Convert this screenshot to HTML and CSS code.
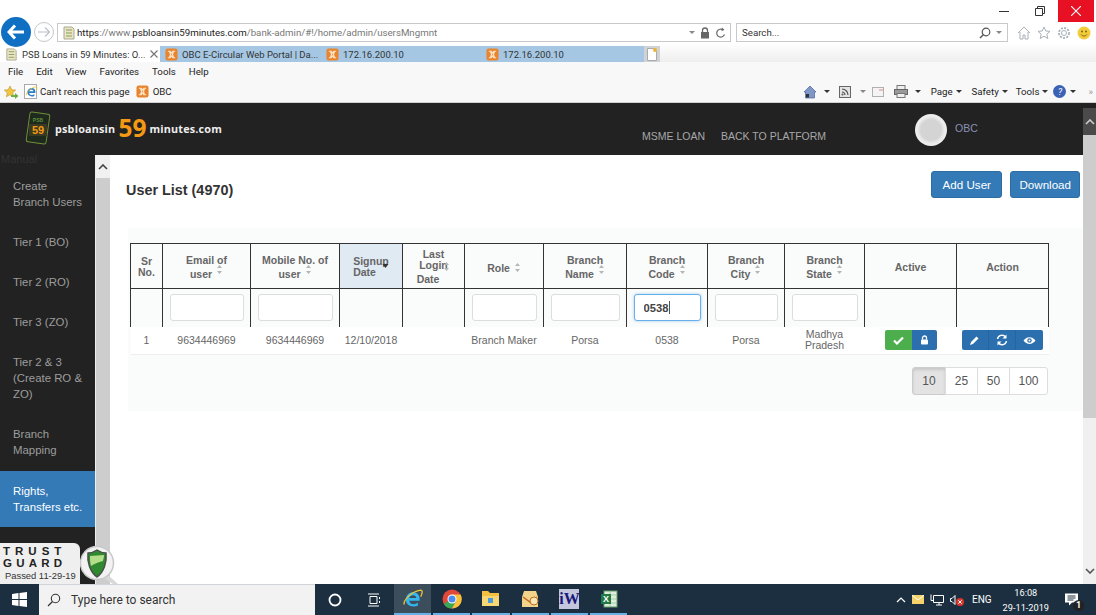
FILE: index.html
```html
<!DOCTYPE html>
<html lang="en">
<head>
    <meta charset="UTF-8">
    <meta name="viewport" content="width=device-width, initial-scale=1.0">
    <title>PSB Loans in 59 Minutes</title>
    <link rel="stylesheet" href="styles.css">
</head>
<body>
    <svg class="sprite" width="0" height="0">
        <symbol id="xampp" viewBox="0 0 14 14">
            <rect x="0.5" y="0.5" width="13" height="13" rx="2.5" fill="#e8832e"/>
            <path d="M3 3.500h2.500l1.500 2 1.500-2H11M3 10.500h2.500l1.500-2 1.500 2H11M5 4l1 3-1 3M9 4L8 7l1 3" fill="none" stroke="#fbe6c8" stroke-width="1.300"/>
        </symbol>
        <symbol id="page" viewBox="0 0 14 16">
            <path d="M2 2h8l2 2v10H2z" fill="#e9e6c8" stroke="#a9a88e"/>
            <path d="M4 5h6M4 8h6M4 11h6" stroke="#8f9a55"/>
        </symbol>
        <symbol id="ie" viewBox="0 0 20 20">
            <path d="M16 11.500H6.500C7 15 11.500 15.500 14.500 13.500V16C10 18 3.500 16.500 3.500 10.500 3.500 5.500 8 3 12 4 15 5 16.500 8 16 11.500zM6.500 9H13C13 5.800 7.500 5.500 6.500 9z" fill="currentColor"/>
            <path d="M2 15C1 11 9 3 17 2c2 0 1.500 3 0 6" fill="none" stroke="#f0c330" stroke-width="1.200"/>
        </symbol>
        <symbol id="sort" viewBox="0 0 7 11">
            <path d="M3.500 1L6 4H1zM3.500 10L1 7h5z" fill="#b5b5b5"/>
        </symbol>
    </svg>

    <!-- browser window -->
    <div class="titlebar">
        <span class="win-btn"><svg width="10" height="10"><path d="M0 5.500h10" stroke="#333"/></svg></span>
        <span class="win-btn"><svg width="10" height="10"><path d="M2.500 2.500V.5h7v7h-2M.5 2.500h7v7h-7z" fill="none" stroke="#333"/></svg></span>
        <span class="win-btn win-close"><svg width="10" height="10"><path d="M0 0l10 10M10 0L0 10" stroke="#fff" stroke-width="1.100"/></svg></span>
    </div>

    <div class="addressrow">
        <span class="back"><svg width="18" height="16" viewBox="0 0 18 16"><path d="M8 1.500L2 8l6 6.500M2.500 8H17" fill="none" stroke="#fff" stroke-width="3"/></svg></span>
        <span class="forward"><svg width="12" height="10" viewBox="0 0 12 10"><path d="M7 .5L11.500 5 7 9.500M11 5H0" fill="none" stroke="#b8c0c8" stroke-width="1.200"/></svg></span>
        <div class="urlbar">
            <svg class="url-icon" width="14" height="16"><use href="#page"/></svg>
            <span class="url"><b>https</b>://www.<b>psbloansin59minutes.com</b>/bank-admin/#!/home/admin/usersMngmnt</span>
            <span class="url-tools">
                <i class="mini-caret"></i>
                <svg width="10" height="12" viewBox="0 0 10 12"><path d="M2.500 5V3.500a2.500 2.500 0 0 1 5 0V5" fill="none" stroke="#666" stroke-width="1.300"/><rect x="1" y="5" width="8" height="6.500" fill="#666"/></svg>
                <svg width="11" height="12" viewBox="0 0 11 12"><path d="M9.500 7.500A4 4 0 1 1 8 2.800" fill="none" stroke="#666" stroke-width="1.200"/><path d="M7 .5l2.500 2.500L6.500 4z" fill="#666"/></svg>
            </span>
        </div>
        <div class="searchbar">
            <span>Search...</span>
            <span class="url-tools">
                <svg width="12" height="12" viewBox="0 0 12 12"><circle cx="7" cy="5" r="3.800" fill="none" stroke="#555" stroke-width="1.200"/><path d="M4.300 7.700L1 11" stroke="#555" stroke-width="1.400"/></svg>
                <i class="mini-caret"></i>
            </span>
        </div>
        <div class="toolicons">
            <svg width="14" height="14" viewBox="0 0 14 14"><path d="M1 7l6-6 6 6M3 6v7h3V9h2v4h3V6" fill="none" stroke="#a8b0b8"/></svg>
            <svg width="14" height="14" viewBox="0 0 14 14"><path d="M7 1l1.800 4 4.200.4-3.200 2.800 1 4.300L7 10.200 3.200 12.500l1-4.300L1 5.400 5.200 5z" fill="none" stroke="#a8b0b8"/></svg>
            <svg width="14" height="14" viewBox="0 0 14 14"><circle cx="7" cy="7" r="2.500" fill="none" stroke="#a8b0b8"/><circle cx="7" cy="7" r="5" fill="none" stroke="#a8b0b8" stroke-width="1.800" stroke-dasharray="2 1.300"/></svg>
            <svg width="14" height="14" viewBox="0 0 14 14"><circle cx="7" cy="7" r="6.500" fill="#f4cc3a"/><circle cx="5" cy="5.500" r="1" fill="#7c6414"/><circle cx="9" cy="5.500" r="1" fill="#7c6414"/><path d="M4 8.500c1.500 2 4.500 2 6 0" fill="none" stroke="#7c6414"/></svg>
        </div>
    </div>

    <div class="tabrow">
        <div class="tab tab-active">
            <svg width="13" height="15"><use href="#page"/></svg>
            <span class="tab-title">PSB Loans in 59 Minutes: O...</span>
            <svg class="tab-x" width="8" height="8"><path d="M.5.500l7 7M7.500.500l-7 7" stroke="#777" stroke-width="1.200"/></svg>
        </div>
        <div class="tab tab-wide"><svg width="13" height="13"><use href="#xampp"/></svg><span>OBC E-Circular Web Portal | Da...</span></div>
        <div class="tab tab-ip"><svg width="13" height="13"><use href="#xampp"/></svg><span>172.16.200.10</span></div>
        <div class="tab tab-ip tab-last"><svg width="13" height="13"><use href="#xampp"/></svg><span>172.16.200.10</span></div>
        <div class="tab-new"><svg width="10" height="13" viewBox="0 0 10 13"><path d="M.5.500h6l3 3v9h-9z" fill="#fff" stroke="#aaa"/><circle cx="8" cy="2" r="2" fill="#f0b232"/></svg></div>
    </div>

    <div class="menubar">
        <span>File</span><span>Edit</span><span>View</span><span>Favorites</span><span>Tools</span><span>Help</span>
    </div>

    <div class="favbar">
        <svg class="fav-star" width="16" height="14" viewBox="0 0 16 14"><path d="M7 1l1.700 3.700 4 .4-3 2.700.9 4L7 9.800 3.400 11.800l.9-4-3-2.700 4-.4z" fill="#f2c53d" stroke="#b8922a" stroke-width=".6"/><path d="M8 10h4V8l3.500 3-3.500 3v-2H8z" fill="#6fae45"/></svg>
        <span class="fav-ie"><svg width="13" height="14" class="ie-blue"><use href="#ie"/></svg></span>
        <span class="fav-text">Can't reach this page</span>
        <svg class="fav-xampp" width="13" height="13"><use href="#xampp"/></svg>
        <span>OBC</span>
        <div class="cmdbar">
            <svg width="14" height="14" viewBox="0 0 14 14"><path d="M1 7l6-6 6 6-1.500 0v6h-9V7z" fill="#7e97c9" stroke="#4d649b" stroke-width=".7"/><rect x="3" y="9" width="3" height="3.500" fill="#333"/></svg><i class="mini-caret dark"></i>
            <svg class="cmd-rss" width="12" height="12" viewBox="0 0 12 12"><rect x=".5" y=".5" width="11" height="11" fill="#e4e4e4" stroke="#666"/><path d="M3 3a6 6 0 0 1 6 6M3 6a3 3 0 0 1 3 3" fill="none" stroke="#555" stroke-width="1.200"/><circle cx="3.500" cy="8.500" r="1" fill="#555"/></svg><i class="mini-caret"></i>
            <svg class="cmd-mail" width="12" height="10" viewBox="0 0 12 10"><rect x=".5" y=".5" width="11" height="9" fill="#f4f4f4" stroke="#b0b0b0"/><path d="M7 3h4" stroke="#d88"/></svg>
            <svg class="cmd-print" width="14" height="13" viewBox="0 0 14 13"><rect x="3" y=".5" width="8" height="4" fill="#eee" stroke="#777"/><rect x=".5" y="4.500" width="13" height="5" fill="#999" stroke="#666"/><rect x="3" y="8.500" width="8" height="4" fill="#eee" stroke="#777"/></svg><i class="mini-caret dark"></i>
            <span class="cmd-label">Page<i class="mini-caret dark"></i></span>
            <span class="cmd-label">Safety<i class="mini-caret dark"></i></span>
            <span class="cmd-label cmd-tools">Tools<i class="mini-caret dark"></i></span>
            <span class="cmd-help"><i>?</i></span><i class="mini-caret dark"></i>
            <span class="cmd-more">»</span>
        </div>
    </div>

    <!-- site -->
    <div class="viewport">
        <div class="site">
            <header class="site-header">
                <div class="brand">
                    <svg class="brand-logo" width="26" height="36" viewBox="0 0 26 36">
                        <rect x="3" y="3" width="20" height="30" rx="2" fill="#1d2a1d" stroke="#6f8f3a" transform="rotate(8 13 18)"/>
                        <text x="13" y="12" class="logo-psb">PSB</text>
                        <rect x="4" y="14" width="18" height="12" fill="#3a3a22"/>
                        <text x="13" y="24" class="logo-59">59</text>
                    </svg>
                    <span class="brand-name">psbloansin</span>
                    <span class="brand-59">59</span>
                    <span class="brand-name">minutes.com</span>
                </div>
                <nav class="site-nav">
                    <a href="#">MSME LOAN</a>
                    <a href="#">BACK TO PLATFORM</a>
                </nav>
                <div class="user">
                    <span class="avatar"></span>
                    <span class="user-name">OBC</span>
                </div>
            </header>

            <div class="main">
                <aside class="sidebar">
                    <div class="side-label">Manual</div>
                    <a class="side-item" href="#">Create<br>Branch Users</a>
                    <a class="side-item" href="#">Tier 1 (BO)</a>
                    <a class="side-item" href="#">Tier 2 (RO)</a>
                    <a class="side-item" href="#">Tier 3 (ZO)</a>
                    <a class="side-item" href="#">Tier 2 &amp; 3 (Create RO &amp; ZO)</a>
                    <a class="side-item" href="#">Branch Mapping</a>
                    <a class="side-item side-active" href="#">Rights, Transfers etc.</a>
                </aside>
                <div class="side-scroll">
                    <span class="side-up"><svg width="10" height="6" viewBox="0 0 10 6"><path d="M1 5l4-4 4 4" fill="none" stroke="#444" stroke-width="1.600"/></svg></span>
                </div>

                <section class="content">
                    <div class="page-head">
                        <h2>User List (4970)</h2>
                        <div class="head-btns">
                            <button class="btn btn-add">Add User</button>
                            <button class="btn">Download</button>
                        </div>
                    </div>

                    <div class="panel">
                        <table class="users">
                            <colgroup>
                                <col class="c32"><col class="c88"><col class="c89"><col class="c63"><col class="c62"><col class="c79"><col class="c83"><col class="c81"><col class="c77"><col class="c80"><col class="c92"><col class="c92">
                            </colgroup>
                            <thead>
                                <tr>
                                    <th>Sr<br>No.</th>
                                    <th>Email of<br>user <svg class="sort" width="7" height="11"><use href="#sort"/></svg></th>
                                    <th>Mobile No. of<br>user <svg class="sort" width="7" height="11"><use href="#sort"/></svg></th>
                                    <th class="sorted">Signup<br>Date <svg class="sort sort-on" width="7" height="6" viewBox="0 0 7 6"><path d="M3.500 5L.5 1h6z" fill="#333"/></svg></th>
                                    <th>Last<br>Login<br>Date <svg class="sort sort-high" width="7" height="11"><use href="#sort"/></svg></th>
                                    <th>Role <svg class="sort sort-flat" width="7" height="11"><use href="#sort"/></svg></th>
                                    <th>Branch<br>Name <svg class="sort" width="7" height="11"><use href="#sort"/></svg></th>
                                    <th>Branch<br>Code <svg class="sort" width="7" height="11"><use href="#sort"/></svg></th>
                                    <th>Branch<br>City <svg class="sort" width="7" height="11"><use href="#sort"/></svg></th>
                                    <th>Branch<br>State <svg class="sort" width="7" height="11"><use href="#sort"/></svg></th>
                                    <th>Active</th>
                                    <th>Action</th>
                                </tr>
                                <tr class="filters">
                                    <td></td>
                                    <td><input type="text"></td>
                                    <td><input type="text"></td>
                                    <td></td>
                                    <td></td>
                                    <td><input type="text"></td>
                                    <td><input type="text"></td>
                                    <td><div class="caret-wrap"><input class="focused" type="text" value="0538"></div></td>
                                    <td><input type="text"></td>
                                    <td><input type="text"></td>
                                    <td></td>
                                    <td></td>
                                </tr>
                            </thead>
                            <tbody>
                                <tr class="row">
                                    <td>1</td>
                                    <td>9634446969</td>
                                    <td>9634446969</td>
                                    <td>12/10/2018</td>
                                    <td></td>
                                    <td>Branch Maker</td>
                                    <td>Porsa</td>
                                    <td>0538</td>
                                    <td>Porsa</td>
                                    <td>Madhya Pradesh</td>
                                    <td>
                                        <div class="btn-group">
                                            <span class="ico ico-green ico-w27"><svg width="11" height="9" viewBox="0 0 11 9"><path d="M1 4.500L4 7.500 10 1.500" fill="none" stroke="#fff" stroke-width="2.200"/></svg></span>
                                            <span class="ico ico-w25"><svg width="9" height="10" viewBox="0 0 9 10"><path d="M2.500 4.500V3a2 2 0 0 1 4 0v1.500" fill="none" stroke="#fff" stroke-width="1.300"/><rect x="1" y="4.500" width="7" height="5" rx="1" fill="#fff"/></svg></span>
                                        </div>
                                    </td>
                                    <td>
                                        <div class="btn-group">
                                            <span class="ico"><svg width="11" height="11" viewBox="0 0 11 11"><path d="M1 10l1-3 5.500-5.500 2 2L4 9z" fill="#fff"/></svg></span>
                                            <span class="ico"><svg width="12" height="12" viewBox="0 0 12 12"><path d="M1.500 5A4.500 4.500 0 0 1 9.500 3M10.500 7A4.500 4.500 0 0 1 2.500 9" fill="none" stroke="#fff" stroke-width="1.500"/><path d="M10.500.5v4h-4zM1.500 11.500v-4h4z" fill="#fff"/></svg></span>
                                            <span class="ico"><svg width="13" height="9" viewBox="0 0 13 9"><path d="M.5 4.500C3.500.0 9.500.0 12.500 4.500 9.500 9 3.500 9 .5 4.500z" fill="#fff"/><circle cx="6.500" cy="4.500" r="2.200" fill="#2b6fae"/><circle cx="6.500" cy="4.500" r="1" fill="#fff"/></svg></span>
                                        </div>
                                    </td>
                                </tr>
                            </tbody>
                        </table>
                        <div class="pager">
                            <span class="page-btn page-on">10</span><span class="page-btn">25</span><span class="page-btn">50</span><span class="page-btn page-100">100</span>
                        </div>
                    </div>
                </section>
            </div>
        </div>

        <div class="page-scroll">
            <span class="scroll-up"><svg width="10" height="6" viewBox="0 0 10 6"><path d="M1 5l4-4 4 4" fill="none" stroke="#ccc" stroke-width="1.600"/></svg></span>
            <span class="scroll-thumb"></span>
            <span class="scroll-track"></span>
            <span class="scroll-down"><svg width="10" height="6" viewBox="0 0 10 6"><path d="M1 1l4 4 4-4" fill="none" stroke="#555" stroke-width="1.600"/></svg></span>
        </div>

        <div class="trust">
            <div class="trust-text">
                <div class="trust-word">TRUST</div>
                <div class="trust-word">GUARD</div>
                <div class="trust-date">Passed 11-29-19</div>
            </div>
            <svg class="trust-seal" width="38" height="39" viewBox="0 0 38 39">
                <path d="M28 30l10 9h-5L24 33z" fill="#d8d8d8"/>
                <circle cx="17" cy="18" r="16.500" fill="#f2f2f2" stroke="#c8c8c8" stroke-width="1.500"/>
                <path d="M17 5c3 2 6 3 9 3 1 9-2 19-9 24C10 27 7 17 8 8c3 0 6-1 9-3z" fill="#2f8a2f" stroke="#4a4f4a" stroke-width="1.500"/>
                <path d="M10 11c4 0 10-1 14-1 0 3-1 5-1 6-5 1-9 3-12 5-1-3-1-7-1-10z" fill="#b4dd8c"/>
            </svg>
        </div>
    </div>

    <!-- taskbar -->
    <footer class="taskbar">
        <span class="start"><svg width="15" height="15" viewBox="0 0 15 15"><path d="M0 2l6.500-1v6H0zM7.500 1L15 0v7H7.500zM0 8h6.500v6L0 13zM7.500 8H15v7l-7.500-1z" fill="#fff"/></svg></span>
        <div class="task-search">
            <svg width="14" height="14" viewBox="0 0 14 14"><circle cx="8.500" cy="5.500" r="4.200" fill="none" stroke="#333" stroke-width="1.100"/><path d="M5.500 8.500L1 13" stroke="#333" stroke-width="1.200"/></svg>
            <span>Type here to search</span>
        </div>
        <span class="task-slot"><svg width="14" height="14" viewBox="0 0 14 14"><circle cx="7" cy="7" r="5.500" fill="none" stroke="#fff" stroke-width="1.800"/></svg></span>
        <span class="task-slot"><svg width="14" height="14" viewBox="0 0 14 14"><path d="M3 3.500h7v7H3zM1 1h11M1 13h11M12.500 4v2M12.500 8v2" fill="none" stroke="#fff"/></svg></span>
        <span class="task-app task-app-on"><svg class="ie-cyan" width="22" height="22"><use href="#ie"/></svg></span>
        <span class="task-app"><svg width="20" height="20" viewBox="0 0 20 20"><circle cx="10" cy="10" r="9.500" fill="#e0483a"/><path d="M10 10L1.800 15A9.500 9.500 0 0 0 10 19.500L14 12z" fill="#3aa757"/><path d="M10 5.500h8.600A9.500 9.500 0 0 1 10 19.500L14 12z" fill="#f6c23c"/><circle cx="10" cy="10" r="4.500" fill="#fff"/><circle cx="10" cy="10" r="3.500" fill="#4a8cf0"/></svg></span>
        <span class="task-app"><svg width="19" height="17" viewBox="0 0 19 17"><path d="M1 1h6l2 2h9v13H1z" fill="#f3c13f"/><rect x="1" y="6" width="17" height="10" fill="#f7d774"/><rect x="7" y="8" width="5" height="5" fill="#4a9bd8"/></svg></span>
        <span class="task-app"><svg width="20" height="20" viewBox="0 0 20 20"><path d="M4 2h12l2 6v10H2V8z" fill="#f3d28a"/><path d="M3 8l7 5 7-5" fill="none" stroke="#c46a1e" stroke-width="1.500"/><circle cx="14" cy="12" r="4" fill="#f5e6b8" stroke="#c46a1e"/></svg></span>
        <span class="task-app"><span class="iw">iW</span></span>
        <span class="task-app"><svg width="18" height="18" viewBox="0 0 18 18"><rect x="4" y="1" width="13" height="16" fill="#dfeeda" stroke="#5d9b6a"/><path d="M4 5h13M4 9h13M4 13h13M10 1v16" stroke="#8cbb95" stroke-width=".7"/><rect x="1" y="4" width="10" height="10" fill="#1f7a45"/><text x="6" y="12" class="xl">X</text></svg></span>
        <div class="tray">
            <svg width="10" height="6" viewBox="0 0 10 6"><path d="M1 5l4-4 4 4" fill="none" stroke="#fff" stroke-width="1.200"/></svg>
            <svg width="12" height="9" viewBox="0 0 12 9"><rect width="12" height="9" fill="#f5d36a"/><path d="M0 0l6 5 6-5" fill="none" stroke="#fff"/></svg>
            <svg width="14" height="12" viewBox="0 0 14 12"><path d="M3.500 1.500h10v7h-10zM1 .5v6h2M6 11h6M9 9v2" fill="none" stroke="#fff"/></svg>
            <svg class="tray-sound" width="14" height="12" viewBox="0 0 14 12"><path d="M5 1.500L2 4.500H.5v3H2l3 3z" fill="none" stroke="#fff"/><circle cx="10" cy="8" r="4" fill="#d9352b"/><path d="M8.300 6.300l3.400 3.400M11.700 6.300L8.300 9.700" stroke="#fff"/></svg>
            <span class="tray-lang">ENG</span>
            <span class="clock"><span>16:08</span><span>29-11-2019</span></span>
            <span class="notify">
                <svg width="15" height="13" viewBox="0 0 15 13"><path d="M1 .5h13v9H8l-3 3v-3H1z" fill="#fff"/><path d="M3.500 3h8M3.500 5h8M3.500 7h6" stroke="#1d3042"/></svg>
                <b class="notify-count">1</b>
            </span>
        </div>
    </footer>
</body>
</html>
```

FILE: styles.css
```css
* {
    box-sizing: border-box;
}
html, body {
    margin: 0;
    padding: 0;
}
body {
    width: 1096px;
    height: 615px;
    overflow: hidden;
    display: flex;
    flex-direction: column;
    position: relative;
    font-family: "Liberation Sans", Arial, sans-serif;
    background: #fff;
}
.sprite {
    position: absolute;
}
svg {
    flex: none;
}

/* browser chrome */
.titlebar {
    height: 22px;
    display: flex;
    justify-content: flex-end;
    background: #fff;
    padding-right: 2px;
}
.win-btn {
    width: 36px;
    display: flex;
    align-items: center;
    justify-content: center;
}
.win-close {
    background: #e81123;
}
.addressrow {
    height: 21px;
    display: flex;
    align-items: center;
    padding-left: 1px;
    font-family: Roboto, sans-serif;
    font-size: 9.7px;
    color: #333;
    background: #fff;
}
.back {
    width: 30px;
    height: 30px;
    margin-top: -2px;
    border-radius: 50%;
    background: #0f6fc2;
    display: flex;
    align-items: center;
    justify-content: center;
    flex: none;
    position: relative;
    z-index: 2;
}
.forward {
    width: 20px;
    height: 20px;
    margin-left: 3px;
    margin-top: -2px;
    border-radius: 50%;
    border: 1px solid #c4c8cc;
    display: flex;
    align-items: center;
    justify-content: center;
    flex: none;
}
.urlbar, .searchbar {
    height: 19px;
    display: flex;
    align-items: center;
    border: 1px solid #c9c9c9;
    background: #fff;
}
.urlbar {
    width: 674px;
    margin-left: 3px;
    padding: 0 4px;
}
.url-icon {
    margin-right: 1px;
}
.url {
    color: #777;
    white-space: nowrap;
}
.url b {
    font-weight: 400;
    color: #222;
}
.url-tools {
    margin-left: auto;
    display: flex;
    align-items: center;
    gap: 5px;
}
.searchbar {
    width: 272px;
    margin-left: 5px;
    padding: 0 5px;
}
.toolicons {
    display: flex;
    gap: 6px;
    margin-left: 9px;
}
.mini-caret {
    display: inline-block;
    width: 0;
    height: 0;
    border-left: 3px solid transparent;
    border-right: 3px solid transparent;
    border-top: 3px solid #888;
}
.mini-caret.dark {
    border-top-color: #333;
}
.tabrow {
    height: 19px;
    display: flex;
    align-items: stretch;
    padding-top: 3px;
    font-family: Roboto, sans-serif;
    font-size: 9.5px;
    color: #333;
    background: linear-gradient(#fff, #eee);
}
.tab {
    display: flex;
    align-items: center;
    gap: 4px;
    padding-left: 5px;
    white-space: nowrap;
    background: #a5c7e3;
}
.tab-active {
    width: 160px;
    background: #fff;
}
.tab-x {
    margin-left: 1px;
}
.tab-wide {
    width: 161px;
}
.tab-ip {
    width: 160px;
}
.tab-last {
    width: 163px;
}
.tab-new {
    width: 16px;
    background: #cfd3d6;
    display: flex;
    align-items: center;
    justify-content: center;
}
.menubar {
    height: 19px;
    display: flex;
    align-items: center;
    gap: 13px;
    padding-left: 8px;
    background: #f8f8f8;
    font-family: Roboto, sans-serif;
    font-size: 9.7px;
    color: #222;
}
.favbar {
    height: 22px;
    display: flex;
    align-items: center;
    padding-left: 3px;
    background: #f8f8f8;
    border-bottom: 1px solid #d0d0d0;
    font-family: Roboto, sans-serif;
    font-size: 9.7px;
    color: #222;
}
.fav-ie {
    margin-left: 5px;
    width: 13px;
    height: 15px;
    border: 1px solid #aaa;
    background: #fff;
    display: flex;
}
.ie-blue {
    color: #2a7fc9;
}
.ie-cyan {
    color: #35b6ee;
}
.fav-text {
    margin-left: 3px;
}
.fav-xampp {
    margin: 0 4px 0 6px;
}
.cmdbar {
    margin-left: auto;
    display: flex;
    align-items: center;
    gap: 7px;
    padding-right: 3px;
}
.cmd-rss {
    margin-left: 2px;
}
.cmd-rss + .mini-caret {
    margin-left: 2px;
}
.cmd-mail {
    margin-left: -1px;
}
.cmd-print {
    margin-left: 3px;
}
.cmd-label {
    display: flex;
    align-items: center;
    gap: 3px;
    margin-left: 3px;
}
.cmd-tools {
    margin-left: 1px;
}
.cmd-help {
    width: 13px;
    height: 13px;
    margin-left: -2px;
    border-radius: 50%;
    background: #3b62b5;
    color: #fff;
    display: flex;
    align-items: center;
    justify-content: center;
    font-size: 9px;
}
.cmd-help + .mini-caret {
    margin-left: -3px;
}
.cmd-more {
    margin-left: 5px;
    color: #999;
}

/* site */
.viewport {
    height: 481px;
    display: flex;
    position: relative;
}
.site {
    flex: 1;
    display: flex;
    flex-direction: column;
    min-width: 0;
}
.site-header {
    height: 52px;
    background: #222;
    display: flex;
    position: relative;
    flex: none;
}
.brand {
    display: flex;
    align-items: center;
    width: 642px;
    padding: 0 0 2px 25px;
    font-family: "Open Sans", sans-serif;
    gap: 3px;
}
.brand-logo {
    margin-right: 1px;
}
.logo-psb {
    font: 700 5px "Liberation Sans", sans-serif;
    fill: #5f8f3a;
    text-anchor: middle;
}
.logo-59 {
    font: 700 11px "Liberation Sans", sans-serif;
    fill: #f39a14;
    text-anchor: middle;
}
.brand-name {
    font-size: 10.8px;
    font-weight: 700;
    color: #eee;
    letter-spacing: 0.2px;
}
.brand-59 {
    font-size: 24.5px;
    line-height: 26px;
    font-weight: 700;
    color: #f39a14;
}
.site-nav {
    display: flex;
    gap: 16px;
    padding-top: 27px;
    width: 273px;
}
.site-nav a {
    font-size: 10.5px;
    color: #a8a8a8;
    text-decoration: none;
}
.user {
    display: flex;
    align-items: flex-start;
    gap: 8px;
    padding-top: 11px;
}
.avatar {
    width: 32px;
    height: 32px;
    border-radius: 50%;
    background: radial-gradient(circle, #d4d4d4 0 45%, #ececec 60%);
}
.user-name {
    font-size: 10.5px;
    color: #8b90b5;
    padding-top: 8px;
}
.main {
    flex: 1;
    display: flex;
    min-height: 0;
}
.sidebar {
    width: 95px;
    flex: none;
    padding-top: 11px;
    background: #222;
    position: relative;
}
.side-label {
    position: absolute;
    top: -2px;
    left: 1px;
    font-size: 11px;
    color: #333;
}
.side-item {
    display: block;
    padding: 12px 6px 12px 13px;
    font-size: 11.4px;
    line-height: 16px;
    color: #9d9d9d;
    text-decoration: none;
}
.side-active {
    margin-top: 1px;
    background: #337ab7;
    color: #fff;
}
.side-scroll {
    width: 15px;
    flex: none;
    background: #cdcdcd;
    border-left: 1px solid #eee;
}
.side-up {
    height: 23px;
    background: #f1f1f1;
    display: flex;
    align-items: center;
    justify-content: center;
}
.content {
    flex: 1;
    background: #fff;
    min-width: 0;
}
.page-head {
    display: flex;
    justify-content: space-between;
    padding: 16px 3px 0 16px;
    height: 43px;
}
.page-head h2 {
    margin: 9px 0 0;
    font-size: 14.4px;
    line-height: 20px;
    color: #333;
}
.head-btns {
    display: flex;
    gap: 8px;
}
.btn {
    height: 27px;
    padding: 0 8px;
    border: 1px solid #2e6da4;
    border-radius: 3px;
    background: #337ab7;
    color: #fff;
    font: 11.6px "Liberation Sans", Arial, sans-serif;
}
.btn-add {
    padding: 0 10.5px;
}
.panel {
    margin: 30px 0 0 18px;
    padding: 15px 35px 16px 2px;
    background: #fafbfb;
}
.users {
    width: 918px;
    table-layout: fixed;
    border-collapse: collapse;
    font-size: 10.5px;
    color: #666;
}
.c32 { width: 32px; }
.c62 { width: 62px; }
.c63 { width: 63px; }
.c77 { width: 77px; }
.c79 { width: 79px; }
.c80 { width: 80px; }
.c81 { width: 81px; }
.c83 { width: 83px; }
.c88 { width: 88px; }
.c89 { width: 89px; }
.c92 { width: 92px; }
.users th {
    height: 45px;
    padding: 2px 4px 0;
    border: 1px solid #333;
    font-weight: 700;
    line-height: 11px;
    text-align: center;
}
.users th.sorted {
    background: #dfeaf3;
}
.sort {
    vertical-align: 1px;
    transform: translateY(-2px);
    margin-left: 1px;
}
.sort-on {
    margin-left: 3px;
    transform: translateY(-6px);
}
.sort-high {
    transform: translateY(-10px);
}
.sort-flat {
    transform: translateY(2px);
}
.filters td {
    height: 38px;
    padding: 0 6.5px;
    border-left: 1px solid #333;
    border-right: 1px solid #333;
    text-align: center;
}
.filters input {
    width: 100%;
    height: 27px;
    padding: 0 9px;
    border: 1px solid #ddd;
    border-radius: 3px;
    background: #fff;
    font: 700 11.2px "Liberation Sans", Arial, sans-serif;
    color: #444;
    display: block;
    outline: none;
}
.filters input.focused {
    border-color: #66afe9;
    box-shadow: 0 0 3px rgba(102, 175, 233, 0.6);
}
.caret-wrap {
    position: relative;
}
.caret-wrap::after {
    content: "";
    position: absolute;
    left: 35px;
    top: 7px;
    width: 1px;
    height: 13px;
    background: #555;
}
.row td {
    height: 28px;
    padding: 0 3px;
    background: #fff;
    border-bottom: 1px solid #eee;
    text-align: center;
    line-height: 11px;
}
.btn-group {
    display: flex;
    justify-content: center;
}
.ico {
    width: 27.3px;
    height: 20px;
    background: #2b6fae;
    display: flex;
    align-items: center;
    justify-content: center;
    border-right: 1px solid #25649e;
}
.ico:first-child {
    border-radius: 2px 0 0 2px;
}
.ico:last-child {
    border-radius: 0 2px 2px 0;
    border-right: 0;
}
.ico-green {
    background: #4cae4c;
    border-right: 0;
}
.ico-w27 {
    width: 27px;
}
.ico-w25 {
    width: 25px;
}
.pager {
    display: flex;
    justify-content: flex-end;
    margin-top: 12px;
    width: 918px;
}
.page-btn {
    width: 33px;
    height: 28px;
    display: flex;
    align-items: center;
    justify-content: center;
    background: #fff;
    border: 1px solid #ddd;
    margin-left: -1px;
    font-size: 12px;
    color: #555;
}
.page-on {
    width: 34px;
    background: #e3e3e3;
    border-color: #ccc;
    border-radius: 3px 0 0 3px;
    box-shadow: inset 0 2px 3px rgba(0, 0, 0, 0.12);
}
.page-100 {
    width: 39px;
    border-radius: 0 3px 3px 0;
}

/* page scrollbar */
.page-scroll {
    width: 13px;
    flex: none;
    display: flex;
    flex-direction: column;
    background: #f0f0f0;
}
.scroll-up {
    height: 32px;
    background: #4a4a4a;
    border-top: 5px solid #222;
    display: flex;
    align-items: center;
    justify-content: center;
}
.scroll-thumb {
    height: 283px;
    background: #cdcdcd;
}
.scroll-track {
    flex: 1;
}
.scroll-down {
    height: 26px;
    display: flex;
    align-items: center;
    justify-content: center;
}

/* seal lying over the sidebar */
.trust {
    position: absolute;
    left: 0;
    bottom: 0;
    width: 118px;
    height: 41px;
    display: flex;
}
.trust-text {
    width: 80px;
    padding: 2px 0 0 3px;
    background: #efefef;
    border-radius: 0 6px 0 0;
    line-height: 12px;
}
.trust-word {
    font-size: 11.5px;
    font-weight: 700;
    letter-spacing: 5px;
    color: #222;
}
.trust-word + .trust-word {
    letter-spacing: 4.2px;
}
.trust-date {
    margin-top: 1px;
    font-size: 9.4px;
    color: #333;
    white-space: nowrap;
    padding-left: 2px;
}
.trust-seal {
    position: absolute;
    left: 80px;
    top: 2px;
}

/* taskbar */
.taskbar {
    height: 31px;
    flex: none;
    display: flex;
    align-items: stretch;
    background: #1c2f40;
}
.start {
    width: 39px;
    display: flex;
    align-items: center;
    justify-content: center;
}
.task-search {
    width: 276px;
    background: #f2f2f2;
    display: flex;
    align-items: center;
    gap: 10px;
    padding-left: 8px;
    font-family: Roboto, sans-serif;
    font-size: 12px;
    color: #333;
    border-top: 1px solid #d0d4d8;
}
.task-slot {
    width: 39px;
    display: flex;
    align-items: center;
    justify-content: center;
}
.task-app {
    width: 37.2px;
    margin: 0 1px;
    display: flex;
    align-items: center;
    justify-content: center;
    border-bottom: 2px solid #66b2e8;
}
.task-app-on {
    background: #3c4e5c;
}
.iw {
    width: 20px;
    height: 20px;
    background: #c4c6dd;
    color: #18187a;
    font: 700 16px "Liberation Serif", serif;
    text-align: center;
    line-height: 20px;
}
.xl {
    font: 700 9px "Liberation Sans", sans-serif;
    fill: #fff;
    text-anchor: middle;
}
.tray {
    margin-left: auto;
    display: flex;
    align-items: center;
    gap: 6px;
    padding-right: 17px;
    font-family: Roboto, sans-serif;
    color: #fff;
}
.tray-lang {
    font-size: 10px;
    margin-left: 2px;
}
.clock {
    display: flex;
    flex-direction: column;
    align-items: center;
    font-size: 9.2px;
    line-height: 15px;
    margin-left: 5px;
}
.notify {
    position: relative;
    margin-left: 9px;
    display: flex;
}
.notify-count {
    position: absolute;
    right: -5px;
    bottom: -5px;
    width: 11px;
    height: 11px;
    border-radius: 50%;
    background: #222;
    font-size: 9px;
    line-height: 11px;
    text-align: center;
}
```
